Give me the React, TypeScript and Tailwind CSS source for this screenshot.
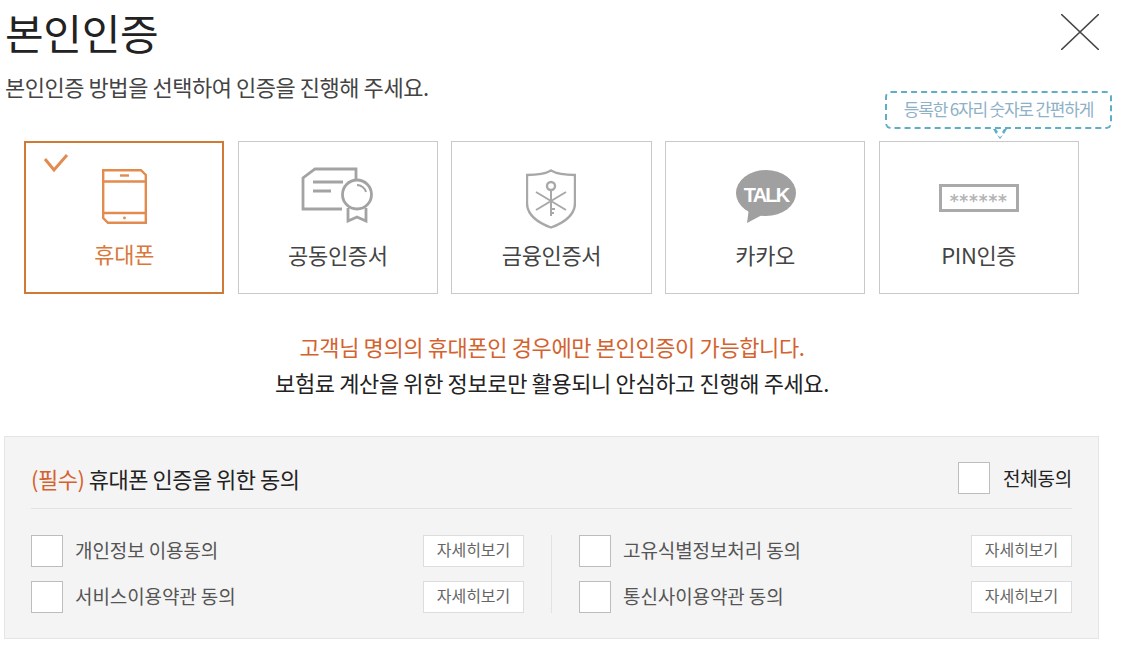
const font = { fontFamily: '"Noto Sans CJK KR", "Noto Sans", sans-serif' };

function PhoneIcon() {
  return (
    <svg width="45" height="55" viewBox="0 0 45 55" fill="none" stroke="#e38b4f" strokeWidth="2.4">
      <path d="M1.2 1.2H39L43.8 6V53.8H6L1.2 49Z" />
      <path d="M1 12.5H44M1 44H44" />
      <path d="M18 6.5H27" />
      <circle cx="22.5" cy="49" r="1.4" fill="#e38b4f" stroke="none" />
    </svg>
  );
}

function CertIcon() {
  return (
    <svg width="73" height="56" viewBox="0 0 73 56" fill="none" stroke="#a3a3a3" strokeWidth="2.8">
      <path d="M55 13V2H14L2 11V42H41" />
      <path d="M12 15H42M12 24H30" />
      <circle cx="56" cy="27.5" r="14.5" />
      <path d="M56 18C60 18 64 21 65 25" strokeWidth="2" />
      <path d="M47 41V54L56 50L65 54V41" />
    </svg>
  );
}

function ShieldIcon() {
  return (
    <svg width="50" height="60" viewBox="0 0 50 60" fill="none" stroke="#a8a8a8" strokeWidth="2.4">
      <path d="M25 1.5C31 5 41 6 49 6V34C49 46 37 54 25 58.5C13 54 1 46 1 34V6C9 6 19 5 25 1.5Z" />
      <circle cx="25" cy="17" r="4" />
      <path d="M25 21V47M25 40H29M25 44H28" strokeWidth="2" />
      <path d="M10 23L40 41M40 23L10 41" strokeWidth="2" />
    </svg>
  );
}

function TalkIcon() {
  return (
    <div className="relative w-[60px] h-[54px]">
      <svg width="60" height="54" viewBox="0 0 60 54" fill="#a0a0a0" className="absolute inset-0">
        <ellipse cx="30" cy="23" rx="30" ry="23" />
        <path d="M13 38L11 53L28 44Z" />
      </svg>
      <span className="absolute left-0 right-0 top-[12px] text-center text-[20px] leading-[26px] font-bold text-white tracking-[-1.8px]" style={{ fontFamily: '"Liberation Sans", sans-serif' }}>
        TALK
      </span>
    </div>
  );
}

function PinIcon() {
  return (
    <div className="w-[80px] h-[28px] border-[3px] border-[#aaaaaa] bg-white flex items-center justify-center pt-[7px] text-[#b4b4b4] text-[17px] font-bold tracking-[0.8px]" style={{ fontFamily: '"DejaVu Sans", sans-serif' }}>
      ******
    </div>
  );
}

function MethodCard({ label, icon, active, iconTop }: { label: string; icon: React.ReactNode; active?: boolean; iconTop: string }) {
  return (
    <div
      className={`relative w-[200.4px] h-[153px] flex flex-col items-center ${
        active ? "border-2 border-[#cf7a35] text-[#d9783a]" : "border border-[#c9c9c9] text-[#444444]"
      }`}
    >
      {active && (
        <svg className="absolute left-[17px] top-[10px]" width="26" height="20" viewBox="0 0 26 20" fill="none" stroke="#e38b4f" strokeWidth="3">
          <path d="M2 6L11 17L24 2" />
        </svg>
      )}
      <div className={`h-[60px] flex items-center ${iconTop}`}>{icon}</div>
      <div className="absolute left-0 right-0 bottom-[24px] text-center text-[22px] leading-[30px] tracking-[-0.35px]">{label}</div>
    </div>
  );
}

function Checkbox() {
  return <div className="w-[32px] h-[32px] shrink-0 bg-white border border-[#bdbdbd]" />;
}

function AgreeRow({ label }: { label: string }) {
  return (
    <div className="flex items-center h-[32px]">
      <Checkbox />
      <span className="ml-[12px] text-[19px] tracking-[-0.1px] text-[#555555] -mt-[1px]">{label}</span>
      <button className="ml-auto w-[101px] h-[32px] bg-white border border-[#dddddd] pb-[4px] text-[16px] text-[#666666]">자세히보기</button>
    </div>
  );
}

export default function App() {
  return (
    <div className="relative w-[1130px] h-[672px] bg-white overflow-hidden" style={font}>
      <div className="flex items-start justify-between pl-[5px] pr-[31px] h-[64px]">
        <h1 className="text-[42px] leading-[64px] text-[#222222] tracking-[-0.3px]">본인인증</h1>
        <svg className="mt-[14px]" width="38" height="36" viewBox="0 0 38 36" stroke="#444444" strokeWidth="1.6">
          <path d="M0 0L38 36M38 0L0 36" />
        </svg>
      </div>
      <p className="pl-[5px] h-[77px] text-[22px] leading-[44px] text-[#444444] tracking-[-0.46px]">본인인증 방법을 선택하여 인증을 진행해 주세요.</p>

      {/* 툴팁 */}
      <div className="absolute left-[885px] top-[91px] w-[227px] h-[38px] border-2 border-dashed border-[#5eaec6] rounded-[6px] bg-white flex items-center justify-center pb-[3px] text-[17px] tracking-[-1.2px] text-[#8eb1c7]">
        등록한 6자리 숫자로 간편하게
      </div>
      <svg className="absolute left-[992px] top-[129px]" width="16" height="11" viewBox="0 0 16 11" fill="#5eaec6">
        <path d="M1 0H4L6 3L4 5ZM15 0H12L10 3L12 5ZM5 6L8 10L11 6L8 8Z" />
      </svg>

      <div className="flex justify-between ml-[24px] w-[1055px]">
        <MethodCard active label="휴대폰" icon={<PhoneIcon />} iconTop="mt-[23px] ml-[1px]" />
        <MethodCard label="공동인증서" icon={<CertIcon />} iconTop="mt-[23px]" />
        <MethodCard label="금융인증서" icon={<ShieldIcon />} iconTop="mt-[27px]" />
        <MethodCard label="카카오" icon={<TalkIcon />} iconTop="mt-[25px] ml-[2px]" />
        <MethodCard label="PIN인증" icon={<PinIcon />} iconTop="mt-[26px]" />
      </div>

      <div className="mt-[34px] w-[1104px] text-center text-[22px] leading-[37px] tracking-[-0.38px]">
        <p className="text-[#d4622f]">고객님 명의의 휴대폰인 경우에만 본인인증이 가능합니다.</p>
        <p className="text-[#222222] -mt-[1px]">보험료 계산을 위한 정보로만 활용되니 안심하고 진행해 주세요.</p>
      </div>

      <div className="absolute left-[4px] top-[436px] w-[1095px] h-[203px] bg-[#f4f4f4] border border-[#e5e5e5] px-[26px]">
        <div className="flex items-center justify-between pt-[25px] pb-[14px] border-b border-[#e2e2e2]">
          <h2 className="text-[22px] leading-[32px] tracking-[-0.5px] text-[#222222]">
            <span className="text-[#d4622f]">(필수)</span> 휴대폰 인증을 위한 동의
          </h2>
          <div className="flex items-center gap-[13px]">
            <Checkbox />
            <span className="text-[19px] leading-[32px] tracking-[-0.2px] text-[#222222]">전체동의</span>
          </div>
        </div>
        <div className="flex mt-[26px]">
          <div className="w-[493px] flex flex-col gap-[14px]">
            <AgreeRow label="개인정보 이용동의" />
            <AgreeRow label="서비스이용약관 동의" />
          </div>
          <div className="w-px bg-[#e2e2e2] ml-[27px] mr-[27px]" />
          <div className="w-[493px] flex flex-col gap-[14px]">
            <AgreeRow label="고유식별정보처리 동의" />
            <AgreeRow label="통신사이용약관 동의" />
          </div>
        </div>
      </div>
    </div>
  );
}
